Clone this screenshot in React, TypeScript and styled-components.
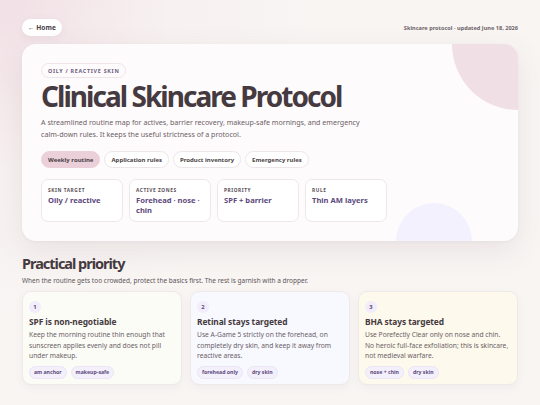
import React, { FC } from 'react';
import styled, { createGlobalStyle } from 'styled-components';

const GlobalStyle = createGlobalStyle`
  html, body {
    margin: 0;
    padding: 0;
  }
  body {
    font-family: 'Noto Sans', 'Open Sans', sans-serif;
    background: #f8f5f3;
    color: #453a40;
  }
`;

const Page = styled.div`
  min-height: 405px;
  box-sizing: border-box;
  padding: 19px 22px 20px;
  background:
    radial-gradient(circle at 0% 0%, rgba(240, 220, 227, 0.85) 0, rgba(246, 236, 238, 0.45) 170px, rgba(248, 245, 243, 0) 320px),
    #f8f5f3;
`;

const TopBar = styled.div`
  display: flex;
  align-items: center;
  justify-content: space-between;
  height: 17px;
  margin-bottom: 8px;
`;

const HomeButton = styled.a`
  display: flex;
  align-items: center;
  height: 17px;
  padding: 0 6px;
  border-radius: 9px;
  background: #ffffff;
  box-shadow: 0 2px 8px rgba(120, 90, 100, 0.08);
  font-size: 6.6px;
  font-weight: 700;
  color: #4a3f45;
  text-decoration: none;
`;

const Meta = styled.span`
  font-size: 5.6px;
  font-weight: 700;
  color: #6f6469;
`;

const Hero = styled.section`
  position: relative;
  overflow: hidden;
  background: #fefbfc;
  border-radius: 14px;
  padding: 19px;
  box-shadow: 0 10px 30px rgba(110, 80, 90, 0.1), 0 1px 3px rgba(110, 80, 90, 0.05);
`;

const Blob = styled.div<{ $size: number; $color: string }>`
  position: absolute;
  width: ${({ $size }) => $size}px;
  height: ${({ $size }) => $size}px;
  border-radius: 50%;
  background: ${({ $color }) => $color};
  pointer-events: none;
`;

const PinkBlob = styled(Blob)`
  top: -66px;
  right: -66px;
`;

const LilacBlob = styled(Blob)`
  bottom: -38px;
  left: 374px;
`;

const HeroContent = styled.div`
  position: relative;
`;

const Eyebrow = styled.span`
  display: flex;
  align-items: center;
  width: max-content;
  height: 15px;
  padding: 0 6px;
  border: 1px solid #eee4ea;
  border-radius: 8px;
  box-sizing: border-box;
  font-size: 5.4px;
  font-weight: 700;
  letter-spacing: 0.13em;
  color: #6c5f80;
  text-transform: uppercase;
`;

const Title = styled.h1`
  margin: 3px 0 0;
  font-size: 28px;
  line-height: 31px;
  font-weight: 700;
  letter-spacing: -0.07em;
  color: #453a40;
`;

const Lead = styled.p`
  margin: 4px 0 0;
  max-width: 335px;
  font-size: 7.1px;
  line-height: 12px;
  color: #6b6166;
`;

const Tabs = styled.div`
  display: flex;
  gap: 4px;
  margin-top: 11px;
`;

const Tab = styled.button<{ $active?: boolean }>`
  height: 17px;
  padding: 0 6px;
  border-radius: 9px;
  border: 1px solid ${({ $active }) => ($active ? '#ebd0d9' : '#ece6e9')};
  background: ${({ $active }) => ($active ? '#ebd0d9' : '#ffffff')};
  font-family: inherit;
  font-size: 6px;
  font-weight: 700;
  color: #4a3f45;
  cursor: pointer;
`;

const Stats = styled.div`
  display: grid;
  grid-template-columns: repeat(4, 82px);
  gap: 6px;
  margin-top: 11px;
`;

const Stat = styled.div`
  height: 43px;
  box-sizing: border-box;
  padding: 7px 6px;
  border: 1px solid #efe8eb;
  border-radius: 7px;
  background: #ffffff;
`;

const StatLabel = styled.div`
  font-size: 4.8px;
  line-height: 6px;
  font-weight: 700;
  letter-spacing: 0.12em;
  text-transform: uppercase;
  color: #5a4f55;
`;

const StatValue = styled.div`
  margin-top: 2px;
  font-size: 7.6px;
  line-height: 10px;
  font-weight: 700;
  color: #5d4a7e;
`;

const Section = styled.section`
  margin-top: 13px;
`;

const SectionTitle = styled.h2`
  margin: 0;
  font-size: 14.5px;
  line-height: 19px;
  font-weight: 700;
  letter-spacing: -0.07em;
  color: #453a40;
`;

const SectionLead = styled.p`
  margin: 3px 0 0;
  font-size: 6.5px;
  line-height: 10px;
  color: #5e5459;
`;

const Cards = styled.div`
  display: grid;
  grid-template-columns: repeat(3, 1fr);
  gap: 8px;
  margin-top: 5px;
`;

const Card = styled.article<{ $bg: string }>`
  box-sizing: border-box;
  height: 94px;
  padding: 9px 7px 8px 6px;
  border: 1px solid #efe9ea;
  border-radius: 9px;
  background: ${({ $bg }) => $bg};
  box-shadow: 0 3px 10px rgba(110, 80, 90, 0.05);
`;

const Badge = styled.span`
  display: flex;
  align-items: center;
  justify-content: center;
  width: 12px;
  height: 12px;
  border-radius: 50%;
  background: #f1edfa;
  font-size: 5.8px;
  font-weight: 700;
  color: #5d4a7e;
`;

const CardTitle = styled.h3`
  margin: 3px 0 0;
  font-size: 8.4px;
  line-height: 11px;
  font-weight: 700;
  letter-spacing: -0.01em;
  color: #453a40;
`;

const CardBody = styled.p`
  margin: 3px 0 0;
  font-size: 6.7px;
  line-height: 10.5px;
  color: #6b6166;
`;

const Chips = styled.div`
  display: flex;
  gap: 4px;
  margin-top: 4px;
`;

const Chip = styled.span`
  display: flex;
  align-items: center;
  height: 13px;
  box-sizing: border-box;
  padding: 0 4px;
  border: 1px solid #ebe5f5;
  border-radius: 7px;
  background: #f3effb;
  font-size: 5.2px;
  font-weight: 700;
  color: #5d4a7e;
`;

const stats = [
  { label: 'Skin target', value: 'Oily / reactive' },
  { label: 'Active zones', value: 'Forehead · nose · chin' },
  { label: 'Priority', value: 'SPF + barrier' },
  { label: 'Rule', value: 'Thin AM layers' },
];

const priorities = [
  {
    n: 1,
    title: 'SPF is non-negotiable',
    body: 'Keep the morning routine thin enough that sunscreen applies evenly and does not pill under makeup.',
    chips: ['am anchor', 'makeup-safe'],
    bg: '#fbfcf6',
  },
  {
    n: 2,
    title: 'Retinal stays targeted',
    body: 'Use A-Game 5 strictly on the forehead, on completely dry skin, and keep it away from reactive areas.',
    chips: ['forehead only', 'dry skin'],
    bg: '#f8f8ff',
  },
  {
    n: 3,
    title: 'BHA stays targeted',
    body: 'Use Porefectly Clear only on nose and chin. No heroic full-face exfoliation; this is skincare, not medieval warfare.',
    chips: ['nose + chin', 'dry skin'],
    bg: '#fdf9ec',
  },
];

const App: FC = () => (
  <>
    <GlobalStyle />
    <Page>
      <TopBar>
        <HomeButton href="#">← Home</HomeButton>
        <Meta>Skincare protocol · updated June 18, 2026</Meta>
      </TopBar>
      <Hero>
        <PinkBlob $size={132} $color="#f0dfe5" />
        <LilacBlob $size={76} $color="#f3f1fe" />
        <HeroContent>
          <Eyebrow>Oily / reactive skin</Eyebrow>
          <Title>Clinical Skincare Protocol</Title>
          <Lead>
            A streamlined routine map for actives, barrier recovery, makeup-safe mornings, and emergency
            calm-down rules. It keeps the useful strictness of a protocol.
          </Lead>
          <Tabs>
            <Tab $active>Weekly routine</Tab>
            <Tab>Application rules</Tab>
            <Tab>Product inventory</Tab>
            <Tab>Emergency rules</Tab>
          </Tabs>
          <Stats>
            {stats.map((s) => (
              <Stat key={s.label}>
                <StatLabel>{s.label}</StatLabel>
                <StatValue>{s.value}</StatValue>
              </Stat>
            ))}
          </Stats>
        </HeroContent>
      </Hero>
      <Section>
        <SectionTitle>Practical priority</SectionTitle>
        <SectionLead>
          When the routine gets too crowded, protect the basics first. The rest is garnish with a dropper.
        </SectionLead>
        <Cards>
          {priorities.map((p) => (
            <Card key={p.n} $bg={p.bg}>
              <Badge>{p.n}</Badge>
              <CardTitle>{p.title}</CardTitle>
              <CardBody>{p.body}</CardBody>
              <Chips>
                {p.chips.map((c) => (
                  <Chip key={c}>{c}</Chip>
                ))}
              </Chips>
            </Card>
          ))}
        </Cards>
      </Section>
    </Page>
  </>
);

export default App;
